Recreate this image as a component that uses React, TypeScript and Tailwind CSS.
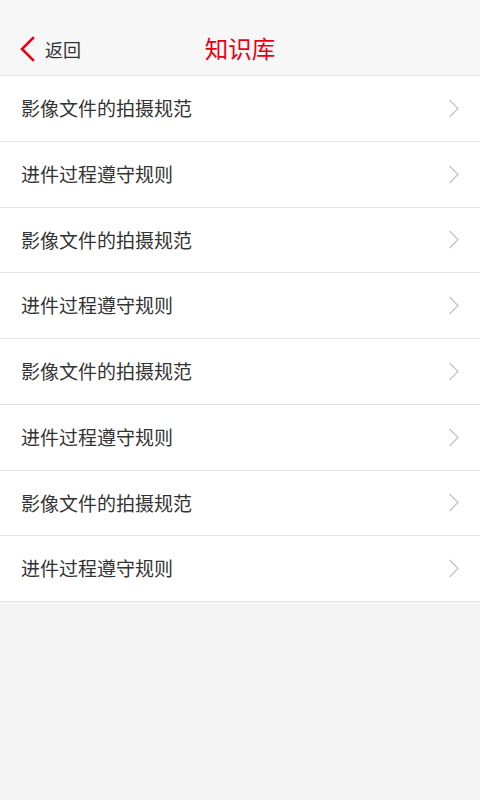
import React from 'react'

const items = [
  '影像文件的拍摄规范',
  '进件过程遵守规则',
  '影像文件的拍摄规范',
  '进件过程遵守规则',
  '影像文件的拍摄规范',
  '进件过程遵守规则',
  '影像文件的拍摄规范',
  '进件过程遵守规则',
]

const font = { fontFamily: '"Noto Sans CJK SC", "Liberation Sans", sans-serif' }

const App: React.FC = () => {
  return (
    <div className="min-h-[800px] w-full bg-[#f4f4f4]" style={font}>
      <div className="h-[76px] bg-[#f7f7f7] border-b border-[#e3e3e3] pt-[23px]">
        <div className="relative h-[52px] flex items-center">
          <div className="flex items-center pl-[19px]">
            <svg width="17" height="26" viewBox="0 0 17 26" fill="none">
              <path d="M14 2 L3 13 L14 24" stroke="#e60012" strokeWidth="2.6" strokeLinecap="square" />
            </svg>
            <span className="ml-[9px] text-[18px] text-[#333]">返回</span>
          </div>
          <div className="absolute left-0 right-0 text-center pointer-events-none">
            <span className="text-[23.5px] text-[#e60012]">知识库</span>
          </div>
        </div>
      </div>
      <div className="bg-white">
        {items.map((item, i) => (
          <div
            key={i}
            className="h-[65.75px] flex items-center justify-between pl-[21px] pr-[20px] border-b border-[#e3e3e3]"
          >
            <span className="text-[19px] text-[#333]">{item}</span>
            <svg width="12" height="19" viewBox="0 0 12 19" fill="none">
              <path d="M1.5 1 L10 9.5 L1.5 18" stroke="#c4c4c4" strokeWidth="1.3" />
            </svg>
          </div>
        ))}
      </div>
    </div>
  )
}

export default App
